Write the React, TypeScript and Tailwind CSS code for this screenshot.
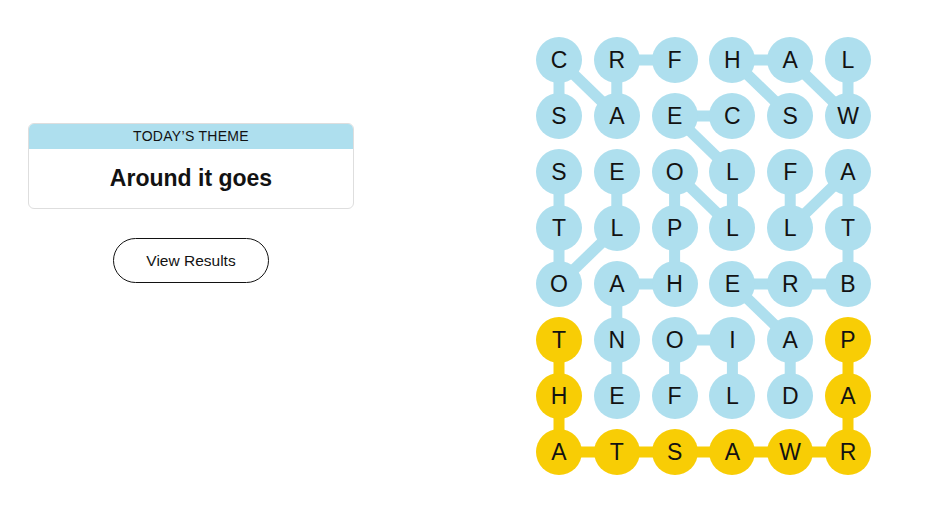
import React from "react";

const letters = [
  "CRFHAL",
  "SAECSW",
  "SEOLFA",
  "TLPLLT",
  "OAHERB",
  "TNOIAP",
  "HEFLDA",
  "ATSAWR",
];

const yellowCells = new Set([
  "5,0", "6,0", "7,0", "7,1", "7,2", "7,3", "7,4", "7,5", "6,5", "5,5",
]);

type Edge = [number, number, number, number];

const blueEdges: Edge[] = [
  [0, 0, 1, 0],
  [0, 0, 1, 1],
  [0, 1, 1, 1],
  [0, 1, 0, 2],
  [0, 3, 0, 4],
  [0, 3, 1, 4],
  [0, 4, 1, 5],
  [0, 5, 1, 5],
  [1, 2, 1, 3],
  [1, 2, 2, 3],
  [2, 0, 3, 0],
  [3, 0, 4, 0],
  [2, 1, 3, 1],
  [3, 1, 4, 0],
  [2, 2, 3, 2],
  [2, 2, 3, 3],
  [2, 3, 3, 3],
  [2, 4, 3, 4],
  [2, 5, 3, 4],
  [2, 5, 3, 5],
  [3, 2, 4, 2],
  [3, 5, 4, 5],
  [4, 1, 4, 2],
  [4, 1, 5, 1],
  [4, 3, 4, 4],
  [4, 4, 4, 5],
  [4, 3, 5, 4],
  [5, 1, 6, 1],
  [5, 2, 5, 3],
  [5, 2, 6, 2],
  [5, 3, 6, 3],
  [5, 4, 6, 4],
];

const yellowEdges: Edge[] = [
  [5, 0, 6, 0],
  [6, 0, 7, 0],
  [7, 0, 7, 1],
  [7, 1, 7, 2],
  [7, 2, 7, 3],
  [7, 3, 7, 4],
  [7, 4, 7, 5],
  [7, 5, 6, 5],
  [6, 5, 5, 5],
];

const cx = (c: number) => 23 + c * 57.8;
const cy = (r: number) => 23 + r * 56;

export default function App() {
  return (
    <div
      className="w-[938px] h-[525px] bg-white flex items-start"
      style={{ fontFamily: '"Liberation Sans", Arial, sans-serif' }}
    >
      <div className="ml-[28px] mt-[123px] w-[326px] flex flex-col items-center">
        <div className="w-full rounded-[6px] border border-[#dedede] overflow-hidden">
          <div className="h-[25px] bg-[#aedfee] flex items-center justify-center text-[14px] tracking-[0.3px] text-[#121212] uppercase">
            Today’s Theme
          </div>
          <div className="h-[59px] flex items-center justify-center text-[23px] font-bold text-[#121212]">
            Around it goes
          </div>
        </div>
        <button className="mt-[29px] w-[156px] h-[45px] rounded-full border border-[#121212] text-[15.5px] text-[#121212] bg-white">
          View Results
        </button>
      </div>

      <div className="ml-[182px] mt-[37px] relative">
        <svg
          className="absolute left-0 top-0"
          width={335}
          height={438}
          viewBox="0 0 335 438"
        >
          {blueEdges.map(([r1, c1, r2, c2], i) => (
            <line
              key={"b" + i}
              x1={cx(c1)}
              y1={cy(r1)}
              x2={cx(c2)}
              y2={cy(r2)}
              stroke="#aedfee"
              strokeWidth={11}
            />
          ))}
          {yellowEdges.map(([r1, c1, r2, c2], i) => (
            <line
              key={"y" + i}
              x1={cx(c1)}
              y1={cy(r1)}
              x2={cx(c2)}
              y2={cy(r2)}
              stroke="#f8cd05"
              strokeWidth={11}
            />
          ))}
        </svg>
        <div className="relative grid grid-cols-[repeat(6,46px)] gap-x-[11.8px] gap-y-[10px]">
          {letters.flatMap((row, r) =>
            row.split("").map((ch, c) => (
              <div
                key={r + "-" + c}
                className={
                  "w-[46px] h-[46px] rounded-full flex items-center justify-center text-[23px] text-[#121212] " +
                  (yellowCells.has(r + "," + c) ? "bg-[#f8cd05]" : "bg-[#aedfee]")
                }
              >
                {ch}
              </div>
            ))
          )}
        </div>
      </div>
    </div>
  );
}
